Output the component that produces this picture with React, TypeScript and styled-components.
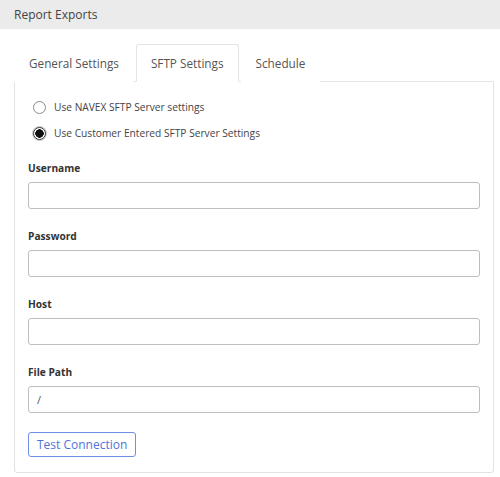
import React, { useState } from 'react';
import styled, { createGlobalStyle } from 'styled-components';

const GlobalStyle = createGlobalStyle`
  html, body {
    margin: 0;
    padding: 0;
    background: #fff;
    font-family: "Open Sans", "Liberation Sans", Arial, sans-serif;
  }
`;

const Page = styled.div`
  width: 500px;
  height: 477px;
  overflow: hidden;
`;

const Header = styled.div`
  height: 29px;
  background: #ebebeb;
  display: flex;
  align-items: center;
  padding-left: 14px;
  font-size: 12px;
  color: #444;
`;

const Body = styled.div`
  padding: 15px 6px 0 14px;
`;

const TabList = styled.div`
  display: flex;
  height: 37px;
`;

const Tab = styled.button<{ $active?: boolean }>`
  font-family: inherit;
  font-size: 11.75px;
  color: #555;
  background: #fff;
  padding: 0 14px;
  margin: 0 2px -1px 0;
  border: 1px solid ${(p) => (p.$active ? '#e3e3e3' : 'transparent')};
  border-bottom-color: ${(p) => (p.$active ? '#fff' : 'transparent')};
  border-radius: 3px 3px 0 0;
  cursor: pointer;
  position: relative;
  z-index: 1;
`;

const Panel = styled.div`
  border: 1px solid #e3e3e3;
  border-radius: 0 0 3px 3px;
  height: 392px;
  box-sizing: border-box;
  padding: 12px 13px 0 13px;
`;

const RadioRow = styled.label`
  display: flex;
  align-items: center;
  gap: 8px;
  height: 26px;
  padding-left: 5px;
  font-size: 10.2px;
  color: #444;
  cursor: pointer;
`;

const RadioDot = styled.span<{ $checked?: boolean }>`
  width: 11px;
  height: 11px;
  border-radius: 50%;
  border: 1px solid ${(p) => (p.$checked ? '#333' : '#8a8a8a')};
  background: ${(p) =>
    p.$checked ? 'radial-gradient(circle, #111 0 4px, #fff 4.5px)' : '#fff'};
  box-shadow: ${(p) => (p.$checked ? '0 0 0 1px #ccc' : 'none')};
`;

const Form = styled.div`
  display: flex;
  flex-direction: column;
`;

const Fields = styled.div`
  display: flex;
  flex-direction: column;
  gap: 20px;
  margin-top: 15px;
`;

const Field = styled.div`
  display: flex;
  flex-direction: column;
  gap: 6px;
`;

const Label = styled.label`
  font-size: 10.2px;
  font-weight: 700;
  color: #333;
  line-height: 15px;
`;

const Input = styled.input`
  height: 27px;
  box-sizing: border-box;
  border: 1px solid #bdbdbd;
  border-radius: 3px;
  padding: 0 8px;
  font-family: inherit;
  font-size: 11px;
  color: #555;
  outline: none;
`;

const Button = styled.button`
  margin-top: 19px;
  align-self: flex-start;
  height: 25px;
  padding: 0 8px;
  background: #fff;
  border: 1px solid #6d8fe8;
  border-radius: 3px;
  color: #5174d8;
  font-family: inherit;
  font-size: 12px;
  cursor: pointer;
`;

const tabs = ['General Settings', 'SFTP Settings', 'Schedule'];
const fields = [
  { label: 'Username', value: '' },
  { label: 'Password', value: '' },
  { label: 'Host', value: '' },
  { label: 'File Path', value: '/' },
];

export default function App() {
  const [tab, setTab] = useState(1);
  const [mode, setMode] = useState(1);
  return (
    <Page>
      <GlobalStyle />
      <Header>Report Exports</Header>
      <Body>
        <TabList>
          {tabs.map((t, i) => (
            <Tab key={t} $active={tab === i} onClick={() => setTab(i)}>
              {t}
            </Tab>
          ))}
        </TabList>
        <Panel>
          <RadioRow onClick={() => setMode(0)}>
            <RadioDot $checked={mode === 0} />
            Use NAVEX SFTP Server settings
          </RadioRow>
          <RadioRow onClick={() => setMode(1)}>
            <RadioDot $checked={mode === 1} />
            Use Customer Entered SFTP Server Settings
          </RadioRow>
          <Form>
            <Fields>
              {fields.map((f) => (
                <Field key={f.label}>
                  <Label>{f.label}</Label>
                  <Input defaultValue={f.value} />
                </Field>
              ))}
            </Fields>
            <Button>Test Connection</Button>
          </Form>
        </Panel>
      </Body>
    </Page>
  );
}
